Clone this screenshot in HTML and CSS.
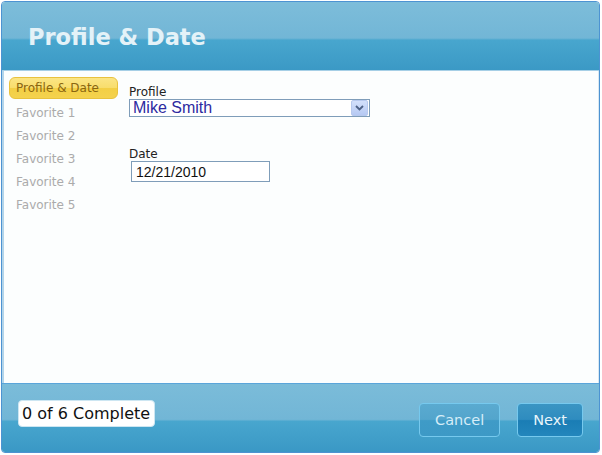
FILE: index.html
```html
<!DOCTYPE html>
<html>
<head>
<meta charset="utf-8">
<link rel="stylesheet" href="styles.css">
</head>
<body>
<div class="window">
  <div class="header"><h1 class="title">Profile &amp; Date</h1></div>
  <div class="content">
    <ul class="steps">
      <li class="step active">Profile &amp; Date</li>
      <li class="step">Favorite 1</li>
      <li class="step">Favorite 2</li>
      <li class="step">Favorite 3</li>
      <li class="step">Favorite 4</li>
      <li class="step">Favorite 5</li>
    </ul>
    <div class="form">
      <div class="field">
        <div class="label">Profile</div>
        <div class="select">
          <span class="select-text">Mike Smith</span>
          <span class="select-btn">
            <svg width="9" height="6" viewBox="0 0 9 6"><path d="M1 1 L4.5 4.5 L8 1" fill="none" stroke="#4d6185" stroke-width="1.8"/></svg>
          </span>
        </div>
      </div>
      <div class="field field-date">
        <div class="label">Date</div>
        <div class="input">12/21/2010</div>
      </div>
    </div>
  </div>
  <div class="footer">
    <div class="progress">0 of 6 Complete</div>
    <div class="buttons">
      <button class="btn">Cancel</button>
      <button class="btn btn-primary">Next</button>
    </div>
  </div>
</div>
</body>
</html>
```
FILE: styles.css
```css
html, body { margin: 0; padding: 0; background: #ffffff; }
body { padding: 1px; font-family: "DejaVu Sans", Verdana, sans-serif; }

.window {
  width: 597px;
  height: 450px;
  border: 1px solid #4d93d2;
  border-radius: 4px;
  display: flex;
  flex-direction: column;
  overflow: hidden;
}

.header {
  height: 68px;
  border-bottom: 1px solid #a6cfe6;
  background: linear-gradient(to bottom, #7dbdda 0%, #72b6d6 53%, #48a6ce 56%, #3b99c5 100%);
  display: flex;
  align-items: center;
}
.title {
  margin: 1px 0 0 26px;
  font-size: 22.5px;
  font-weight: bold;
  color: #e4f2f8;
}

.content {
  flex: 1;
  display: flex;
  background: #fcfefe;
  border-left: 2px solid #b3d5ea;
  border-right: 1px solid #d8e8f2;
}

.steps {
  list-style: none;
  margin: 0;
  padding: 6px 0 0 5px;
  width: 109px;
}
.step {
  box-sizing: border-box;
  height: 23px;
  line-height: 21px;
  padding-left: 6px;
  font-size: 12px;
  color: #ababab;
  border: 1px solid transparent;
  border-radius: 6px;
}
.step.active {
  height: 22px;
  line-height: 20px;
  margin-bottom: 3px;
  color: #8a6510;
  background: linear-gradient(to bottom, #fbe585 0%, #f8dd6c 50%, #f3cf45 52%, #f4d24e 100%);
  border-color: #e9c23e;
}

.form {
  padding: 14px 0 0 11px;
  display: flex;
  flex-direction: column;
}
.label {
  font-size: 12px;
  color: #222;
  line-height: 14px;
  height: 14px;
}
.select {
  width: 239px;
  height: 16px;
  border: 1px solid #7f9db9;
  background: #fff;
  display: flex;
  align-items: center;
  justify-content: space-between;
}
.select-text {
  font-family: "Liberation Sans", Arial, sans-serif;
  font-size: 16px;
  color: #2e2aa0;
  padding-left: 3px;
  line-height: 16px;
}
.select-btn {
  width: 15px;
  height: 14px;
  margin-right: 1px;
  border: 1px solid #b7c9ee;
  border-radius: 2px;
  background: linear-gradient(to bottom, #d3e0fb, #b6c9f3);
  display: flex;
  align-items: center;
  justify-content: center;
}
.field-date { margin-top: 30px; }
.input {
  margin-left: 2px;
  width: 133px;
  height: 19px;
  border: 1px solid #7f9db9;
  background: #fff;
  padding-left: 4px;
  font-family: "Liberation Sans", Arial, sans-serif;
  font-size: 14px;
  line-height: 20px;
  color: #111;
}

.footer {
  height: 68px;
  border-top: 1px solid #5aa5da;
  background: linear-gradient(to bottom, #7bbcd9 0%, #72b6d6 52%, #48a6ce 55%, #3a98c5 100%);
  display: flex;
  justify-content: space-between;
  align-items: flex-start;
}
.progress {
  margin: 16px 0 0 16px;
  background: #fff;
  border: 1px solid #cde6f2;
  border-radius: 4px;
  padding: 0 4px 0 3px;
  height: 25px;
  line-height: 25px;
  font-size: 16px;
  color: #111;
}
.buttons {
  display: flex;
  gap: 17px;
  margin: 19px 16px 0 0;
}
.btn {
  height: 34px;
  padding: 0 15px;
  border: 1px solid #76c9ee;
  border-radius: 4px;
  background: linear-gradient(to bottom, #5aaad0 0%, #53a5cc 48%, #3f9bc7 52%, #3d99c6 100%);
  color: #d6edf8;
  font-family: "DejaVu Sans", Verdana, sans-serif;
  font-weight: normal;
  font-size: 14.5px;
}
.btn-primary {
  background: linear-gradient(to bottom, #3a95c3 0%, #2f8cbf 48%, #1a7db5 52%, #2386bc 100%);
  color: #e8f5fb;
}
```
